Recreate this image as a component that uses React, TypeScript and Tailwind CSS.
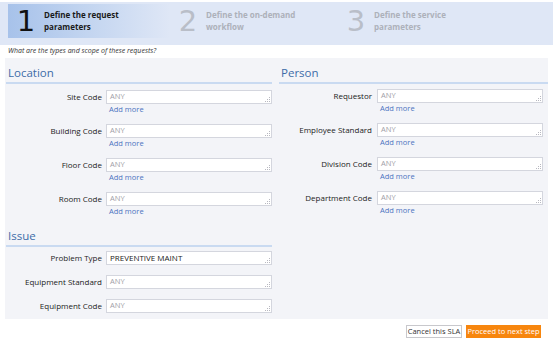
const Grip = () => (
  <svg width="5" height="5" viewBox="0 0 5 5" className="absolute right-[1px] bottom-[1px]">
    <rect x="4" y="0" width="1" height="1" fill="#b8b8c0" />
    <rect x="2" y="2" width="1" height="1" fill="#b8b8c0" />
    <rect x="4" y="2" width="1" height="1" fill="#b8b8c0" />
    <rect x="0" y="4" width="1" height="1" fill="#b8b8c0" />
    <rect x="2" y="4" width="1" height="1" fill="#b8b8c0" />
    <rect x="4" y="4" width="1" height="1" fill="#b8b8c0" />
  </svg>
);

const Field = ({ value }: { value?: string }) => (
  <div className="relative w-[166px] h-[14px] bg-white border border-[#d4d6de] flex items-center pl-[3px]">
    {value ? (
      <span className="text-[8px] text-[#222] leading-none">{value}</span>
    ) : (
      <span className="text-[7.5px] text-[#a0a0a6] leading-none">ANY</span>
    )}
    <Grip />
  </div>
);

const Row = ({ label, value, more, labelW }: { label: string; value?: string; more?: boolean; labelW: string }) => (
  <div className="mb-[10px]">
    <div className="flex items-center">
      <div className={`${labelW} text-right text-[8px] text-[#222] leading-none`}>{label}</div>
      <Field value={value} />
    </div>
    {more && (
      <div className="flex">
        <div className={labelW} />
        <div className="text-[7.5px] text-[#4b73bf] leading-[10px] pl-[3px]">Add more</div>
      </div>
    )}
  </div>
);

const Heading = ({ title }: { title: string }) => (
  <div className="pt-[8px] pb-[2px] pl-[2px] border-b-2 border-[#c9daf1]">
    <div className="text-[11.5px] leading-[14px] text-[#3d6ca8]">{title}</div>
  </div>
);

const Step = ({ n, lines, active, w }: { n: string; lines: string[]; active?: boolean; w: string }) => (
  <div
    className={`${w} h-[34px] flex items-center ${
      active ? "bg-gradient-to-r from-[#a7c2ea] via-[#c3d5f0] to-[#dfe7f6]" : ""
    }`}
  >
    <div
      className={`w-[36px] text-center text-[29px] leading-none font-normal font-['DejaVu_Sans',sans-serif] ${
        active ? "text-[#111]" : "text-[#b9bec8]"
      }`}
    >
      {n}
    </div>
    <div className={`text-[8px] font-bold leading-[12px] ${active ? "text-[#1a1a1a]" : "text-[#adb1ba]"}`}>
      {lines.map((l) => (
        <div key={l}>{l}</div>
      ))}
    </div>
  </div>
);

const App = () => {
  return (
    <div className="w-[553px] h-[344px] bg-white font-['Open_Sans',sans-serif] overflow-hidden">
      <div className="h-[2px]" />
      <div className="h-[43px] bg-[#dfe7f6] flex pt-[2px]">
        <div className="w-[8px]" />
        <Step n="1" lines={["Define the request", "parameters"]} active w="w-[162px]" />
        <Step n="2" lines={["Define the on-demand", "workflow"]} w="w-[168px]" />
        <Step n="3" lines={["Define the service", "parameters"]} w="w-[170px]" />
      </div>
      <div className="h-[13px] pl-[8px] flex items-center text-[7px] italic text-[#333]">
        What are the types and scope of these requests?
      </div>
      <div className="mx-[5px] h-[261px] bg-[#f3f4f8] flex gap-[6px]">
        <div className="w-[268px] px-[1px]">
          <Heading title="Location" />
          <div className="mt-[6px]">
            <Row label="Site Code" more labelW="w-[100px] pr-[4px]" />
            <Row label="Building Code" more labelW="w-[100px] pr-[4px]" />
            <Row label="Floor Code" more labelW="w-[100px] pr-[4px]" />
            <Row label="Room Code" more labelW="w-[100px] pr-[4px]" />
          </div>
          <div className="-mt-[5px]">
            <Heading title="Issue" />
          </div>
          <div className="mt-[4px]">
            <Row label="Problem Type" value="PREVENTIVE MAINT" labelW="w-[100px] pr-[4px]" />
            <Row label="Equipment Standard" labelW="w-[100px] pr-[4px]" />
            <Row label="Equipment Code" labelW="w-[100px] pr-[4px]" />
          </div>
        </div>
        <div className="w-[269px]">
          <Heading title="Person" />
          <div className="mt-[5px]">
            <Row label="Requestor" more labelW="w-[98px] pr-[5px]" />
            <Row label="Employee Standard" more labelW="w-[98px] pr-[5px]" />
            <Row label="Division Code" more labelW="w-[98px] pr-[5px]" />
            <Row label="Department Code" more labelW="w-[98px] pr-[5px]" />
          </div>
        </div>
      </div>
      <div className="flex justify-end gap-[4px] pr-[12px] pt-[6px]">
        <button className="w-[56px] h-[13px] bg-white border border-[#c8c8cc] text-[7.5px] text-[#333] leading-none">
          Cancel this SLA
        </button>
        <button className="w-[75px] h-[13px] bg-[#f7860e] text-[7.5px] text-white leading-none">
          Proceed to next step
        </button>
      </div>
    </div>
  );
};

export default App;
